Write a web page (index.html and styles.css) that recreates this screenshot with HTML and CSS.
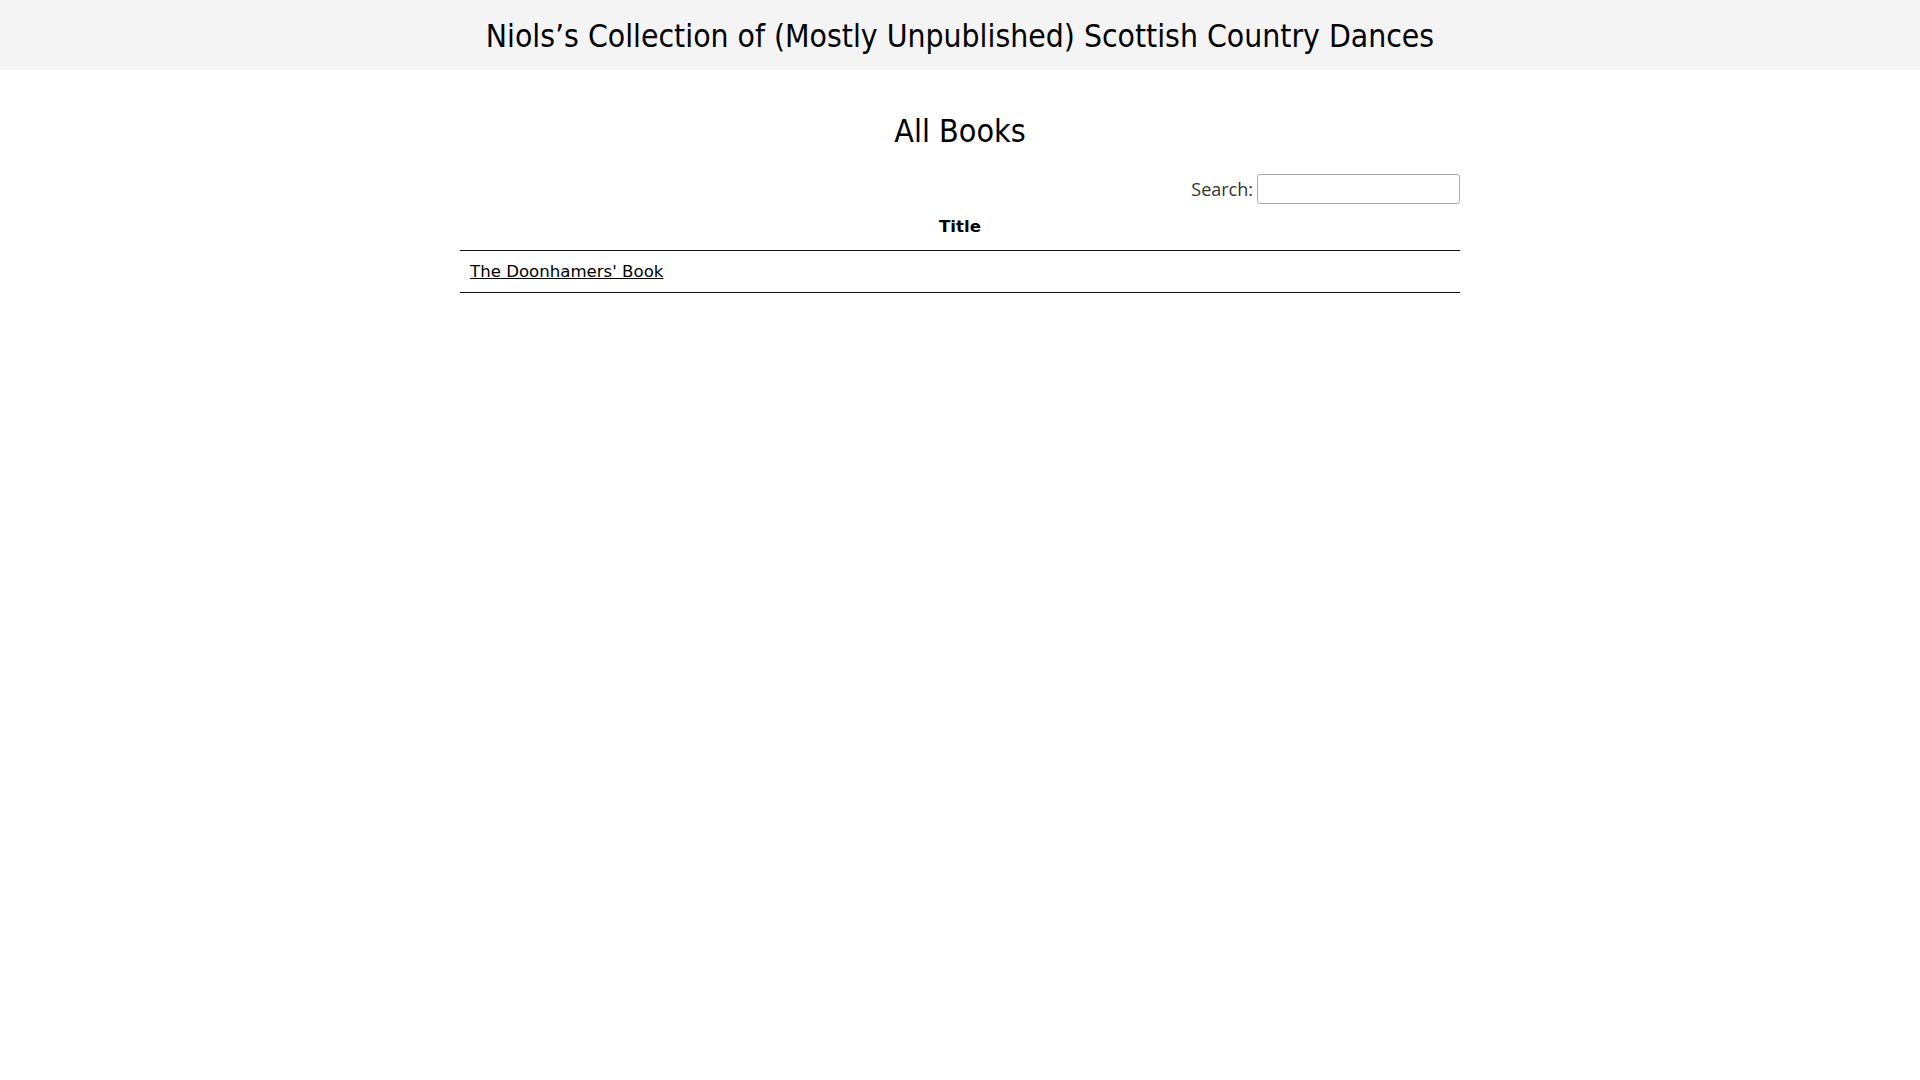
FILE: index.html
```html
<!DOCTYPE html>
<html lang="en">
<head>
<meta charset="utf-8">
<title>All Books</title>
<link rel="stylesheet" href="styles.css">
</head>
<body>
<header class="site-header">
  <h1 class="site-title">Niols’s Collection of (Mostly Unpublished) Scottish Country Dances</h1>
</header>
<main class="content">
  <h2 class="page-title">All Books</h2>
  <div class="search-row">
    <label class="search-label">Search:<input class="search-input" type="search"></label>
  </div>
  <table class="books">
    <thead>
      <tr><th>Title</th></tr>
    </thead>
    <tbody>
      <tr><td><a href="#">The Doonhamers' Book</a></td></tr>
    </tbody>
  </table>
</main>
</body>
</html>
```
FILE: styles.css
```css
html, body {
  margin: 0;
  padding: 0;
  background: #fff;
  color: #000;
  font-family: "DejaVu Sans", sans-serif;
}
.site-header {
  background: #f4f4f4;
  height: 70px;
  display: flex;
  align-items: center;
  justify-content: center;
}
.site-title {
  margin: 0;
  padding-top: 4px;
  font-family: "DejaVu Sans Condensed", "DejaVu Sans", sans-serif;
  font-weight: normal;
  font-size: 31.6px;
  line-height: 1;
}
.content {
  max-width: 1000px;
  margin: 0 auto;
}
.page-title {
  margin: 0;
  padding-top: 43px;
  font-family: "DejaVu Sans Condensed", "DejaVu Sans", sans-serif;
  font-weight: normal;
  font-size: 32px;
  line-height: 36px;
  text-align: center;
}
.search-row {
  display: flex;
  justify-content: flex-end;
  margin-top: 25px;
}
.search-label {
  font-family: "Open Sans", sans-serif;
  font-size: 18px;
  color: #333;
  display: flex;
  align-items: center;
}
.search-input {
  margin-left: 4px;
  width: 203px;
  height: 30px;
  box-sizing: border-box;
  border: 1px solid #aaa;
  border-radius: 3px;
  padding: 4px;
  background: #fff;
}
.books {
  width: 100%;
  border-collapse: collapse;
  margin-top: 2px;
  font-size: 16.6px;
}
.books th {
  font-weight: bold;
  padding: 11px 18px 13px;
  border-bottom: 1px solid #111;
  text-align: center;
  line-height: 20px;
}
.books td {
  padding: 8px 10px;
  border-bottom: 1px solid #111;
  line-height: 25px;
  text-align: left;
}
.books a {
  color: #000;
  text-decoration: underline;
}
```
